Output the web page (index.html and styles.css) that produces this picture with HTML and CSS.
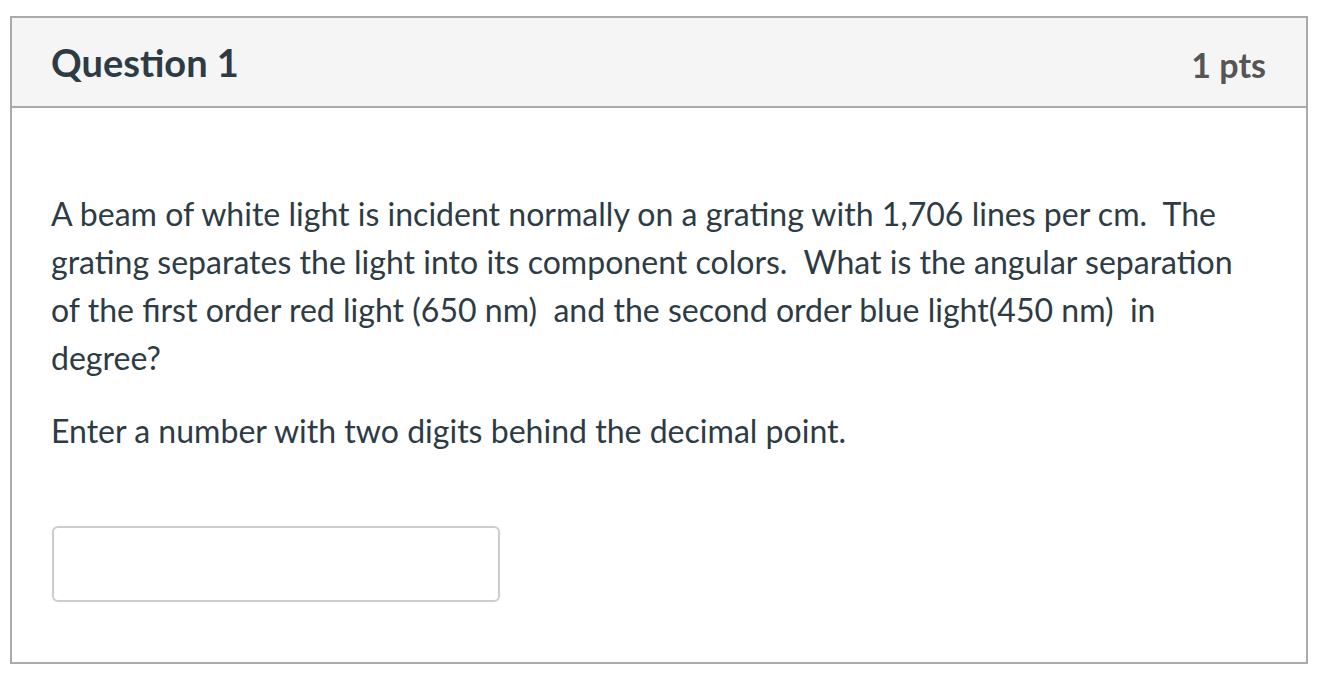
FILE: index.html
```html
<!DOCTYPE html>
<html lang="en">
<head>
<meta charset="utf-8">
<title>Question 1</title>
<link rel="stylesheet" href="styles.css">
</head>
<body>
<div class="question">
  <div class="header">
    <h2 class="title">Question 1</h2>
    <span class="points">1 pts</span>
  </div>
  <div class="content">
    <p class="text">A beam of white light is incident normally on a grating with 1,706 lines per cm.&nbsp; The grating separates the light into its component colors.&nbsp; What is the angular separation of the first order red light (650 nm)&nbsp; and the second order blue light(450 nm)&nbsp; in degree?</p>
    <p class="text">Enter a number with two digits behind the decimal point.</p>
    <div class="answer"><input class="input" type="text" aria-label="answer"></div>
  </div>
</div>
</body>
</html>
```

FILE: styles.css
```css
html, body {
  margin: 0;
  padding: 0;
  background: #fff;
}
body {
  font-family: Lato, "Open Sans", sans-serif;
  color: #2d3b45;
}
.question {
  margin: 16px 14px 0 10px;
  border: 2px solid #aaaaaa;
}
.header {
  display: flex;
  align-items: center;
  justify-content: space-between;
  height: 88px;
  padding: 0 40px 0 39px;
  background: #f5f5f5;
  border-bottom: 2px solid #aaaaaa;
}
.title {
  margin: 0;
  font-size: 38px;
  font-weight: 700;
  color: #2d3b45;
}
.points {
  padding-top: 4px;
  font-size: 34px;
  font-weight: 700;
  color: #555555;
}
.content {
  padding: 82px 40px 60px 39px;
}
.text {
  margin: 0 0 25px;
  font-size: 32.06px;
  line-height: 48px;
}
.answer {
  padding-top: 46px;
}
.input {
  display: block;
  box-sizing: border-box;
  width: 448px;
  height: 76px;
  margin: 0 0 0 1px;
  border: 2px solid #cccccc;
  border-radius: 6px;
  background: #fff;
}
```
